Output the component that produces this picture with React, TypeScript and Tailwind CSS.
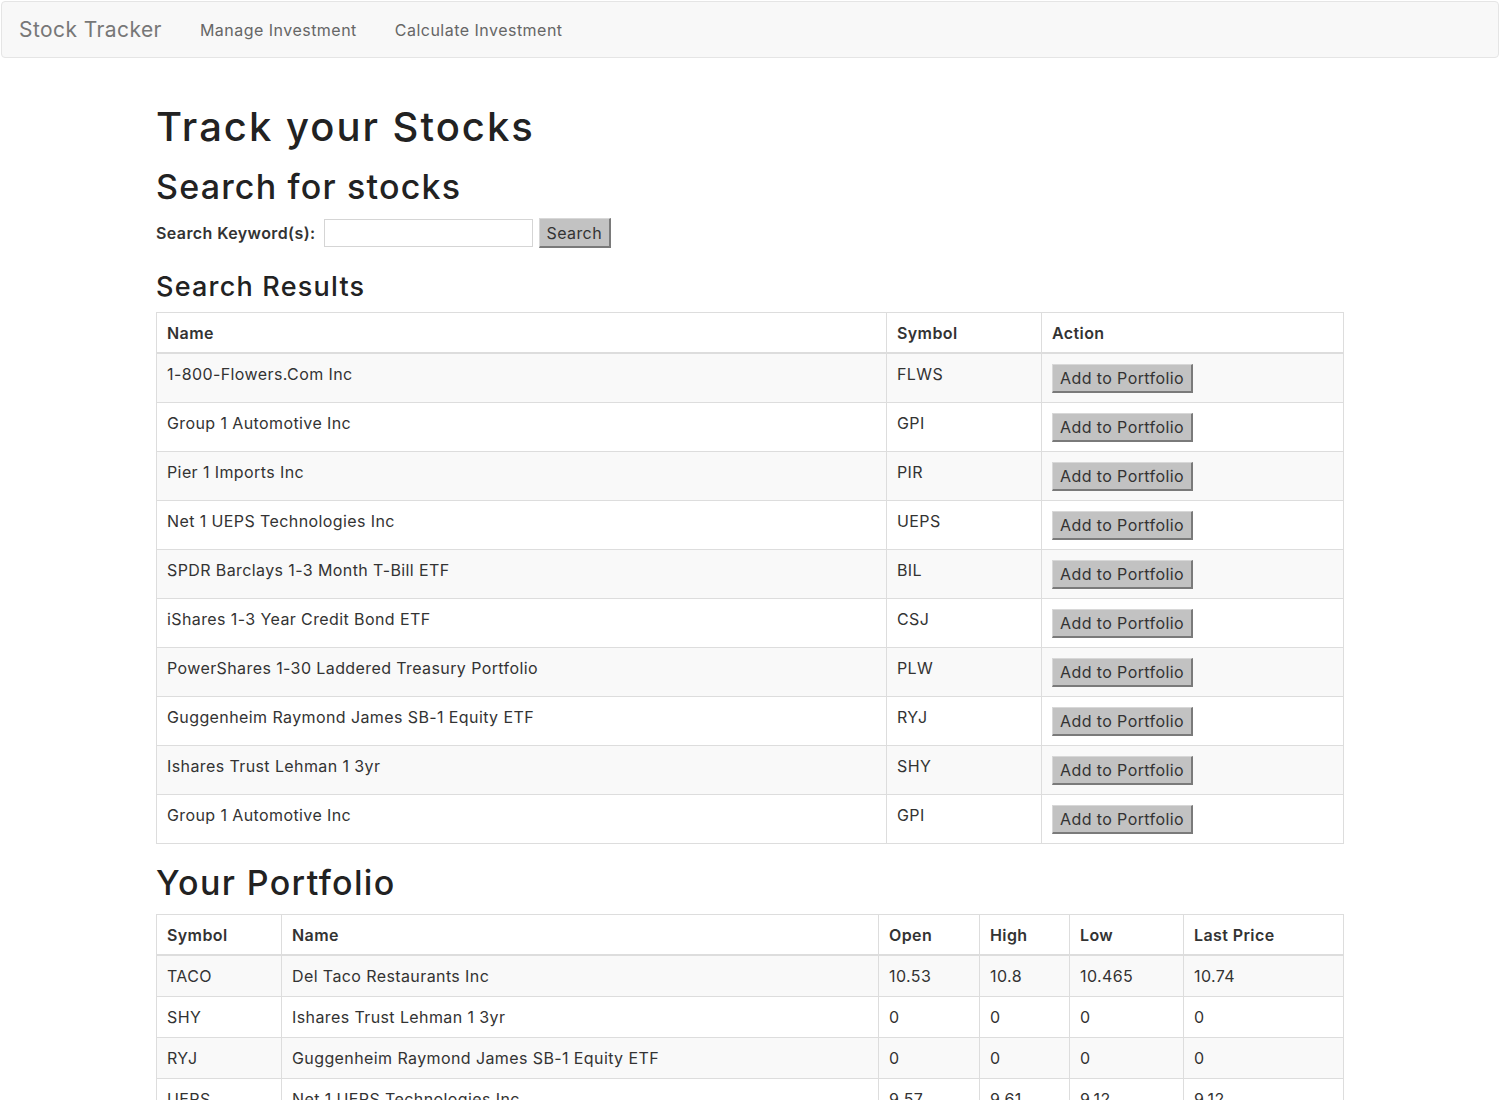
const results = [
  { name: "1-800-Flowers.Com Inc", symbol: "FLWS" },
  { name: "Group 1 Automotive Inc", symbol: "GPI" },
  { name: "Pier 1 Imports Inc", symbol: "PIR" },
  { name: "Net 1 UEPS Technologies Inc", symbol: "UEPS" },
  { name: "SPDR Barclays 1-3 Month T-Bill ETF", symbol: "BIL" },
  { name: "iShares 1-3 Year Credit Bond ETF", symbol: "CSJ" },
  { name: "PowerShares 1-30 Laddered Treasury Portfolio", symbol: "PLW" },
  { name: "Guggenheim Raymond James SB-1 Equity ETF", symbol: "RYJ" },
  { name: "Ishares Trust Lehman 1 3yr", symbol: "SHY" },
  { name: "Group 1 Automotive Inc", symbol: "GPI" },
];

const portfolio = [
  { symbol: "TACO", name: "Del Taco Restaurants Inc", open: "10.53", high: "10.8", low: "10.465", last: "10.74" },
  { symbol: "SHY", name: "Ishares Trust Lehman 1 3yr", open: "0", high: "0", low: "0", last: "0" },
  { symbol: "RYJ", name: "Guggenheim Raymond James SB-1 Equity ETF", open: "0", high: "0", low: "0", last: "0" },
  { symbol: "UEPS", name: "Net 1 UEPS Technologies Inc", open: "9.57", high: "9.61", low: "9.12", last: "9.12" },
];

const th = "border border-[#dddddd] border-b-2 px-[10px] pt-[9px] pb-[8px] text-left text-[16px] font-semibold align-bottom";
const td = "border border-[#dddddd] px-[10px] py-[9px] align-top";

function GrayButton({ label, className = "" }: { label: string; className?: string }) {
  return (
    <button
      className={`bg-[#c2c2c2] text-[#333] text-[16px] tracking-[0.025em] leading-none border border-t-[#d8d8d8] border-l-[#d8d8d8] border-r-2 border-b-2 border-r-[#7a7a7a] border-b-[#7a7a7a] px-[7px] ${className}`}
    >
      {label}
    </button>
  );
}

export default function App() {
  return (
    <div className="min-h-[1100px] bg-white text-[#333] text-[16px] leading-[22px] tracking-[0.025em] font-['Inter','DejaVu_Sans',sans-serif]">
      <nav className="mt-px mx-px h-[57px] flex items-center bg-[#f8f8f8] border border-[#e5e5e5] rounded-[4px] px-[17px]">
        <span className="text-[21px] text-[#777] tracking-[0.02em]">Stock Tracker</span>
        <a className="ml-[38px] text-[16px] text-[#666] tracking-[0.03em]">Manage Investment</a>
        <a className="ml-[38px] text-[16px] text-[#666] tracking-[0.03em]">Calculate Investment</a>
      </nav>

      <main className="w-[1188px] mx-auto">
        <h1 className="mt-[46px] text-[40px] leading-[45px] font-medium tracking-[0.05em] text-[#222]">Track your Stocks</h1>
        <h2 className="mt-[19px] text-[34px] leading-[37px] font-medium tracking-[0.035em] text-[#222]">Search for stocks</h2>
        <div className="mt-[13px] flex items-center">
          <label className="font-semibold text-[16px]">Search Keyword(s):</label>
          <input className="ml-[8px] w-[209px] h-[28px] border border-[#d5d5d5] bg-white" />
          <GrayButton label="Search" className="ml-[6px] h-[30px]" />
        </div>
        <h3 className="mt-[24px] text-[27px] leading-[30px] font-medium tracking-[0.045em] text-[#222]">Search Results</h3>

        <table className="mt-[10px] w-full border-collapse">
          <thead>
            <tr>
              <th className={`${th} w-[730px]`}>Name</th>
              <th className={`${th} w-[155px]`}>Symbol</th>
              <th className={th}>Action</th>
            </tr>
          </thead>
          <tbody>
            {results.map((r, i) => (
              <tr key={i} className={i % 2 === 0 ? "bg-[#f9f9f9]" : "bg-white"}>
                <td className={td}>{r.name}</td>
                <td className={td}>{r.symbol}</td>
                <td className={td}>
                  <GrayButton label="Add to Portfolio" className="mt-px h-[29px] block" />
                </td>
              </tr>
            ))}
          </tbody>
        </table>

        <h2 className="mt-[20px] text-[34px] leading-[37px] font-medium tracking-[0.04em] text-[#222]">Your Portfolio</h2>
        <table className="mt-[13px] w-full border-collapse">
          <thead>
            <tr>
              <th className={`${th} w-[125px]`}>Symbol</th>
              <th className={`${th} w-[597px]`}>Name</th>
              <th className={`${th} w-[101px]`}>Open</th>
              <th className={`${th} w-[90px]`}>High</th>
              <th className={`${th} w-[114px]`}>Low</th>
              <th className={th}>Last Price</th>
            </tr>
          </thead>
          <tbody>
            {portfolio.map((p, i) => (
              <tr key={i} className={i % 2 === 0 ? "bg-[#f9f9f9]" : "bg-white"}>
                <td className={td}>{p.symbol}</td>
                <td className={td}>{p.name}</td>
                <td className={td}>{p.open}</td>
                <td className={td}>{p.high}</td>
                <td className={td}>{p.low}</td>
                <td className={td}>{p.last}</td>
              </tr>
            ))}
          </tbody>
        </table>
      </main>
    </div>
  );
}
